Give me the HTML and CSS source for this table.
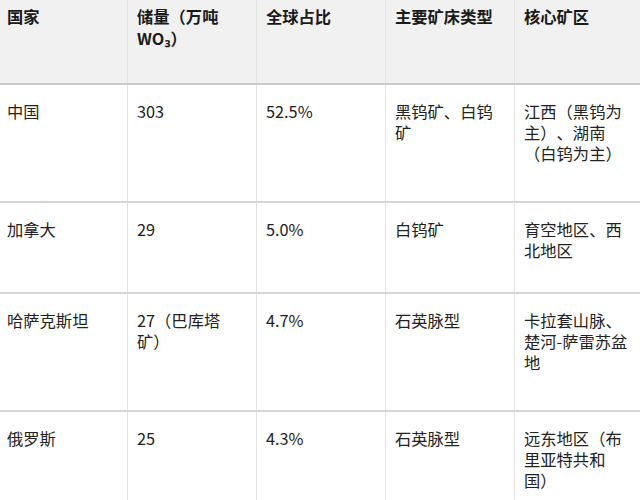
FILE: index.html
```html
<!DOCTYPE html>
<html lang="zh-CN">
<head>
<meta charset="utf-8">
<link rel="stylesheet" href="styles.css">
</head>
<body>
<table class="tbl">
  <colgroup>
    <col class="c1"><col class="c2"><col class="c3"><col class="c4"><col class="c5">
  </colgroup>
  <thead>
    <tr class="head">
      <th>国家</th>
      <th>储量（万吨WO₃）</th>
      <th>全球占比</th>
      <th>主要矿床类型</th>
      <th>核心矿区</th>
    </tr>
  </thead>
  <tbody>
    <tr class="tall">
      <td>中国</td>
      <td>303</td>
      <td>52.5%</td>
      <td>黑钨矿、白钨矿</td>
      <td>江西（黑钨为主）、湖南（白钨为主）</td>
    </tr>
    <tr class="short">
      <td>加拿大</td>
      <td>29</td>
      <td>5.0%</td>
      <td>白钨矿</td>
      <td>育空地区、西北地区</td>
    </tr>
    <tr class="tall">
      <td>哈萨克斯坦</td>
      <td>27（巴库塔矿）</td>
      <td>4.7%</td>
      <td>石英脉型</td>
      <td>卡拉套山脉、楚河-萨雷苏盆地</td>
    </tr>
    <tr class="tall">
      <td>俄罗斯</td>
      <td>25</td>
      <td>4.3%</td>
      <td>石英脉型</td>
      <td>远东地区（布里亚特共和国）</td>
    </tr>
  </tbody>
</table>
</body>
</html>
```

FILE: styles.css
```css
html, body {
  margin: 0;
  padding: 0;
  background: #ffffff;
}

body {
  width: 640px;
  height: 500px;
  overflow: hidden;
  font-family: "Noto Sans CJK SC", "Noto Sans", sans-serif;
  color: #222222;
}

.tbl {
  margin-left: -3px;
  width: 646px;
  table-layout: fixed;
  border-collapse: collapse;
  font-size: 16.3px;
  text-spacing-trim: space-all;
}

.c1 { width: 130px; }
.c2 { width: 129px; }
.c3 { width: 129px; }
.c4 { width: 129px; }
.c5 { width: 129px; }

.tbl th,
.tbl td {
  vertical-align: top;
  text-align: left;
  padding: 16px 9px 0 9px;
  line-height: 21px;
  border-left: 1px solid #e3e3e3;
  border-right: 1px solid #e3e3e3;
  border-bottom: 2px solid #d6d6d6;
}

.tbl th {
  background: #f1f1f1;
  font-weight: 700;
  color: #1a1a1a;
  padding-top: 5px;
  line-height: 22px;
  border-bottom: 2px solid #c9c9c9;
}

.head { height: 84px; }
.tall { height: 118px; }
.short { height: 91px; }
```
